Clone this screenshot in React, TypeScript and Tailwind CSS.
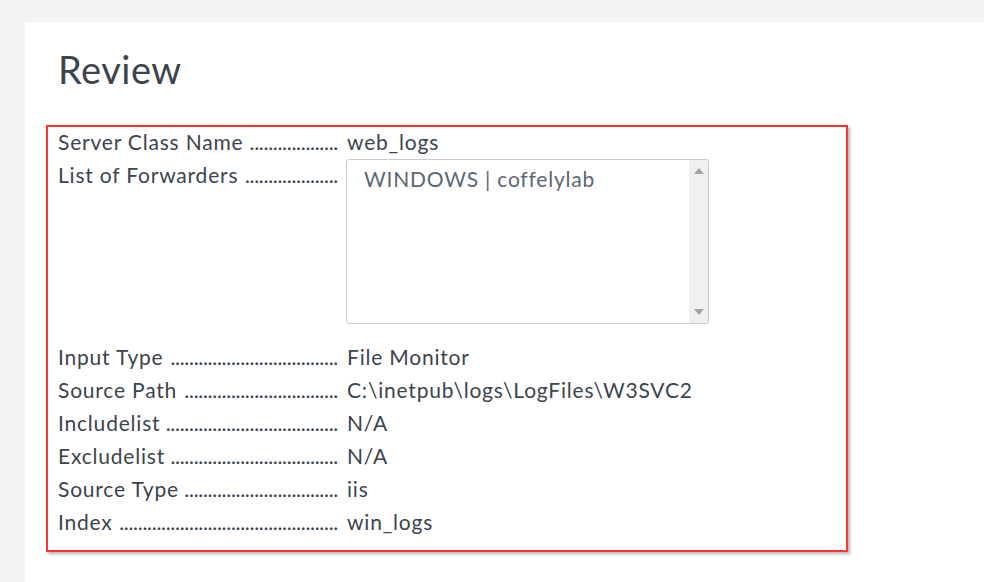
const rows = [
  { label: "Input Type", value: "File Monitor", dots: 36 },
  { label: "Source Path", value: "C:\\inetpub\\logs\\LogFiles\\W3SVC2", dots: 33 },
  { label: "Includelist", value: "N/A", dots: 37 },
  { label: "Excludelist", value: "N/A", dots: 36 },
  { label: "Source Type", value: "iis", dots: 33 },
  { label: "Index", value: "win_logs", dots: 47 },
];

function Label({ text, dots }: { text: string; dots: number }) {
  return (
    <div className="w-[280px] shrink-0 flex justify-between whitespace-nowrap overflow-hidden">
      <span className="tracking-[0.8px]">{text}</span>
      <span className="tracking-[-0.3px]">{".".repeat(dots)}</span>
    </div>
  );
}

export default function App() {
  return (
    <div
      className="min-h-screen bg-[#f2f3f5] pt-[22px] pl-[25px] overflow-hidden"
      style={{ fontFamily: "Lato, 'Open Sans', sans-serif" }}
    >
      <div className="bg-white min-h-[560px] pl-[21px] pt-[22px] text-[#3c444d]">
        <h1 className="text-[38px] leading-[50px] pl-[12px] mb-[31px] font-normal tracking-[0.5px]">Review</h1>

        <div className="w-[802px] border-2 border-[#ff3131] shadow-[2px_2px_3px_rgba(0,0,0,0.3)] pl-[10px] pb-[12px] text-[21px] leading-[33px]">
          <div className="-mt-[2px]">
            <div className="flex gap-[9px]">
              <Label text="Server Class Name" dots={19} />
              <div className="tracking-[0.8px]">web_logs</div>
            </div>
            <div className="flex gap-[8px] mb-[16px]">
              <Label text="List of Forwarders" dots={20} />
              <div className="relative mt-[1px] w-[363px] h-[165px] border border-[#c3cbd4] rounded-[3px] flex overflow-hidden">
                <div className="flex-1 pl-[17px] pt-[2px] text-[#5c6773] tracking-[0.8px] whitespace-nowrap">
                  WINDOWS | coffelylab
                </div>
                <div className="w-[19px] bg-[#f0f0f0] flex flex-col items-center justify-between py-[8px]">
                  <svg width="10" height="6" viewBox="0 0 10 6">
                    <path d="M5 0 L10 6 L0 6 Z" fill="#a3a3a3" />
                  </svg>
                  <svg width="10" height="6" viewBox="0 0 10 6">
                    <path d="M0 0 L10 0 L5 6 Z" fill="#a3a3a3" />
                  </svg>
                </div>
              </div>
            </div>
            {rows.map((r) => (
              <div key={r.label} className="flex gap-[9px]">
                <Label text={r.label} dots={r.dots} />
                <div className="tracking-[0.8px]">{r.value}</div>
              </div>
            ))}
          </div>
        </div>
      </div>
    </div>
  );
}
